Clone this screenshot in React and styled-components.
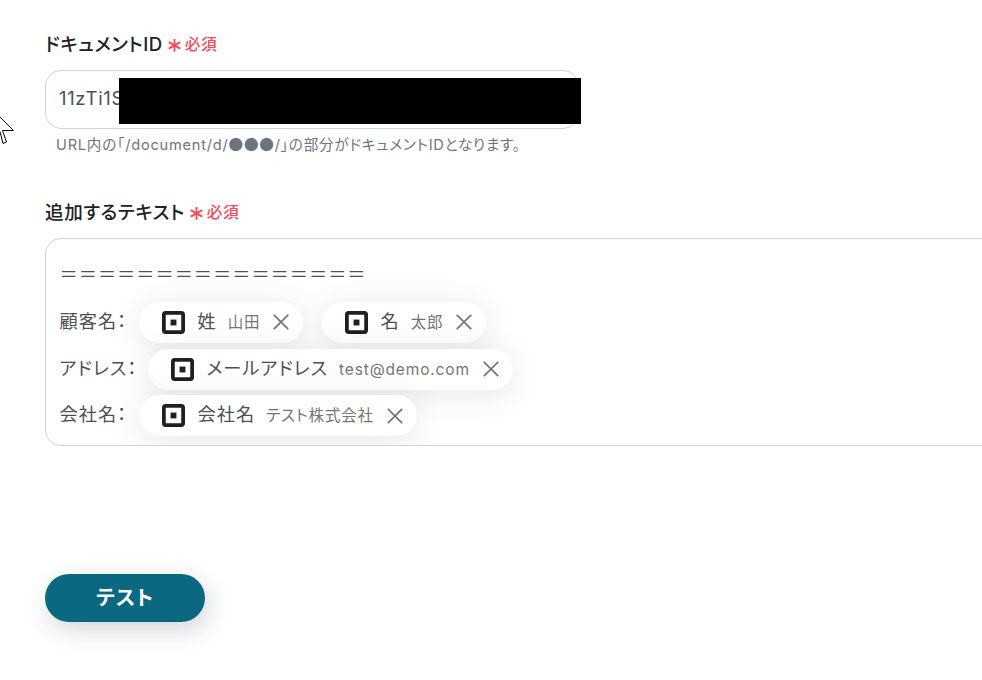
import React from "react";
import styled, { createGlobalStyle } from "styled-components";

const GlobalStyle = createGlobalStyle`
  * { box-sizing: border-box; }
  html, body { margin: 0; background: #fff; }
  body {
    overflow: hidden;
    font-family: Inter, "Noto Sans CJK JP", sans-serif;
    font-feature-settings: "palt";
    color: #212121;
  }
`;

const Page = styled.main`
  position: relative;
  width: 982px;
  height: 680px;
  padding: 31px 0 0 45px;
  overflow: hidden;
`;

const Field = styled.section`
  height: ${(p) => p.$height}px;
`;

const LabelRow = styled.div`
  display: flex;
  align-items: center;
  height: 26px;
  margin-bottom: 13px;
  white-space: nowrap;
`;

const Label = styled.label`
  font-size: 18.6px;
  font-weight: 500;
  line-height: 26px;
  letter-spacing: 0.55px;
`;

const Required = styled.span`
  display: flex;
  align-items: center;
  gap: 4px;
  margin: 2px 0 0 5px;
  color: #ff4757;
  font-size: 15.6px;
  font-weight: 500;
  line-height: 24px;
  letter-spacing: 0.9px;
`;

const InputBox = styled.div`
  position: relative;
  display: flex;
  align-items: center;
  width: 534px;
  height: 59px;
  padding: 0 13px 4px;
  border: 1px solid #ced4da;
  border-radius: 16px;
  color: #495057;
  font-size: 18.4px;
  letter-spacing: 0.7px;
`;

const Redaction = styled.div`
  position: absolute;
  left: 73px;
  top: 7px;
  width: 462px;
  height: 46px;
  background: #000;
`;

const Hint = styled.p`
  margin: 3px 0 0 11px;
  color: #6c757d;
  font-size: 14.6px;
  line-height: 24px;
  letter-spacing: 0.78px;
  white-space: nowrap;
`;

const Bullets = styled.span`
  font-family: "Noto Sans CJK JP", sans-serif;
  font-feature-settings: "palt" 0;
`;

const Editor = styled.div`
  width: 980px;
  height: 208px;
  padding: 10px 14px 0 13.5px;
  overflow: hidden;
  border: 1px solid #ced4da;
  border-radius: 16px;
  color: #495057;
  font-size: 18.2px;
  letter-spacing: 1px;
`;

const Line = styled.div`
  display: flex;
  align-items: center;
  height: ${(p) => p.$height || 46.7}px;
  padding-bottom: ${(p) => (p.$height ? 2 : 0)}px;
  white-space: nowrap;
`;

const Prefix = styled.span`
  width: ${(p) => p.$width}px;
  line-height: 26px;
  padding-bottom: 2.5px;
`;

const Chip = styled.span`
  display: flex;
  align-items: center;
  width: ${(p) => p.$width}px;
  height: 41px;
  margin-right: 19px;
  padding: 0 14px 0 23px;
  border-radius: 21px;
  background: #fff;
  box-shadow: 0 4px 32px rgba(0, 0, 0, 0.1);
`;

const ChipName = styled.span`
  margin-left: 12.5px;
  line-height: 26px;
  padding-bottom: 2.5px;
`;

const ChipValue = styled.span`
  margin-left: 11px;
  padding-top: 1.5px;
  color: #757575;
  font-size: 15.5px;
  line-height: 24px;
  letter-spacing: 0.85px;
`;

const CloseSvg = styled.svg`
  margin-left: auto;
  flex: none;
`;

const TestButton = styled.button`
  display: block;
  width: 160px;
  height: 48px;
  padding: 0 0 5px;
  border: 0;
  border-radius: 24px;
  background: #0a6880;
  box-shadow: 4px 8px 24px rgba(33, 51, 67, 0.2);
  color: #fff;
  font-family: inherit;
  font-feature-settings: inherit;
  font-size: 20.4px;
  font-weight: 700;
  letter-spacing: 0.8px;
`;

const Pointer = styled.svg`
  position: absolute;
  left: -7px;
  top: 110px;
`;

const Asterisk = () => (
  <svg width="13" height="14" viewBox="0 0 13 14" stroke="currentColor" strokeWidth="1.9">
    <path d="M6.5 1v12.8M0.7 4.2l11.6 6.4M12.3 4.2L0.7 10.6" />
  </svg>
);

const BlockIcon = () => (
  <svg width="23" height="23" viewBox="0 0 22 22">
    <rect x="1.8" y="1.8" width="18.4" height="18.4" rx="1.7" fill="#fff" stroke="#231f20" strokeWidth="3.6" />
    <rect x="8.2" y="8.2" width="5.6" height="5.6" fill="#231f20" />
  </svg>
);

const CloseIcon = () => (
  <CloseSvg width="16" height="16" viewBox="0 0 16 16" stroke="#757575" strokeWidth="1.7">
    <path d="M0.8 0.8l14.4 14.4M15.2 0.8L0.8 15.2" />
  </CloseSvg>
);

const FieldLabel = ({ children }) => (
  <LabelRow>
    <Label>{children}</Label>
    <Required>
      <Asterisk />
      必須
    </Required>
  </LabelRow>
);

const Variable = ({ name, value, width }) => (
  <Chip $width={width}>
    <BlockIcon />
    <ChipName>{name}</ChipName>
    <ChipValue>{value}</ChipValue>
    <CloseIcon />
  </Chip>
);

export default function App() {
  return (
    <>
      <GlobalStyle />
      <Page>
        <Field $height={168}>
          <FieldLabel>ドキュメントID</FieldLabel>
          <InputBox>
            11zTi1S
            <Redaction />
          </InputBox>
          <Hint>
            URL内の「/document/d/<Bullets>●●●</Bullets>/」の部分がドキュメントIDとなります。
          </Hint>
        </Field>
        <Field $height={375}>
          <FieldLabel>追加するテキスト</FieldLabel>
          <Editor>
            <Line $height={50}>＝＝＝＝＝＝＝＝＝＝＝＝＝＝＝＝</Line>
            <Line>
              <Prefix $width={79.5}>顧客名：</Prefix>
              <Variable name="姓" value="山田" width={164} />
              <Variable name="名" value="太郎" width={164} />
            </Line>
            <Line>
              <Prefix $width={88.5}>アドレス：</Prefix>
              <Variable name="メールアドレス" value="test@demo.com" width={365} />
            </Line>
            <Line>
              <Prefix $width={79.5}>会社名：</Prefix>
              <Variable name="会社名" value="テスト株式会社" width={278} />
            </Line>
          </Editor>
        </Field>
        <TestButton>テスト</TestButton>
        <Pointer width="22" height="36" viewBox="0 0 22 36" fill="#fff" stroke="#000" strokeWidth="1">
          <path d="M0.5 0.5V27.5L7 21.5L10 33.5L13.5 32L9.5 20.5H20.5Z" />
        </Pointer>
      </Page>
    </>
  );
}
